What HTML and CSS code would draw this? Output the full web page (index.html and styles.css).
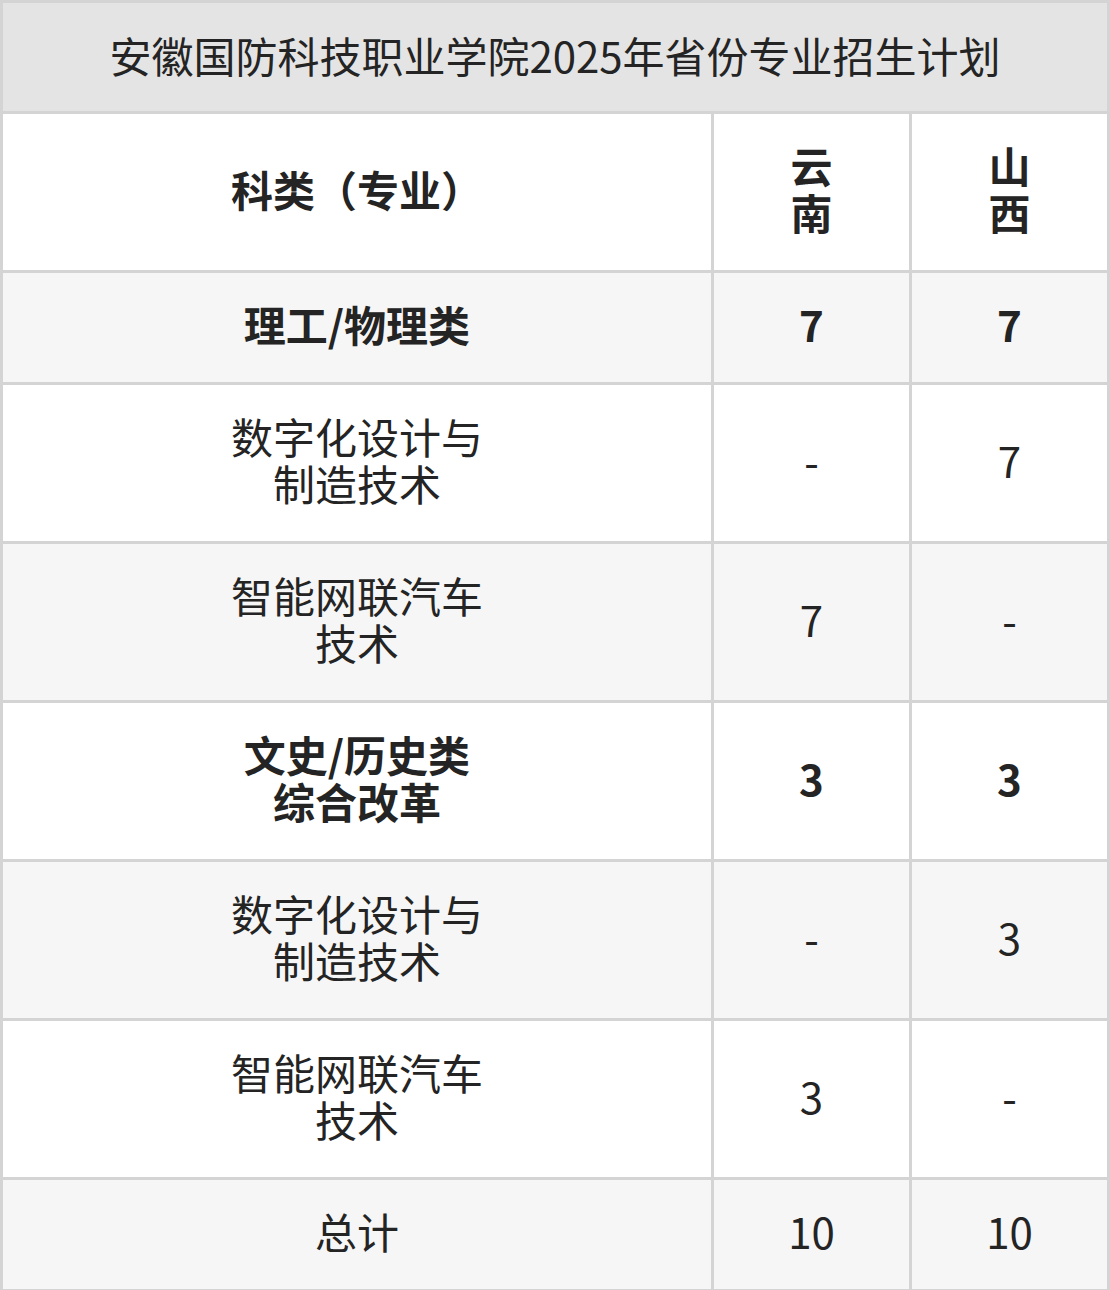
FILE: index.html
```html
<!DOCTYPE html>
<html lang="zh-CN">
<head>
<meta charset="utf-8">
<title>安徽国防科技职业学院2025年省份专业招生计划</title>
<link rel="stylesheet" href="styles.css">
</head>
<body>
<table class="plan">
  <colgroup>
    <col class="c-name">
    <col class="c-prov">
    <col class="c-prov">
  </colgroup>
  <tr class="title-row">
    <td colspan="3" class="title">安徽国防科技职业学院2025年省份专业招生计划</td>
  </tr>
  <tr class="head-row">
    <th>科类<span class="paren">（</span>专业<span class="paren">）</span></th>
    <th>云<br>南</th>
    <th>山<br>西</th>
  </tr>
  <tr class="alt strong">
    <td>理工/物理类</td>
    <td>7</td>
    <td>7</td>
  </tr>
  <tr>
    <td>数字化设计与<br>制造技术</td>
    <td>-</td>
    <td>7</td>
  </tr>
  <tr class="alt">
    <td>智能网联汽车<br>技术</td>
    <td>7</td>
    <td>-</td>
  </tr>
  <tr class="strong">
    <td>文史/历史类<br>综合改革</td>
    <td>3</td>
    <td>3</td>
  </tr>
  <tr class="alt">
    <td>数字化设计与<br>制造技术</td>
    <td>-</td>
    <td>3</td>
  </tr>
  <tr>
    <td>智能网联汽车<br>技术</td>
    <td>3</td>
    <td>-</td>
  </tr>
  <tr class="alt">
    <td>总计</td>
    <td>10</td>
    <td>10</td>
  </tr>
</table>
</body>
</html>
```

FILE: styles.css
```css
html, body {
  margin: 0;
  padding: 0;
  background: #ffffff;
}

body {
  font-family: "Noto Sans CJK SC", "Noto Sans", sans-serif;
  color: #242424;
}

.plan {
  width: 1110px;
  border-collapse: collapse;
  table-layout: fixed;
}

.c-name { width: 711px; }
.c-prov { width: 198px; }

.plan td,
.plan th {
  border: 3px solid #d4d4d4;
  text-align: center;
  vertical-align: middle;
  padding: 27px 0 35px;
  font-size: 42px;
  line-height: 47px;
  font-weight: 400;
}

.plan th {
  font-weight: 700;
  background: #ffffff;
}

.paren {
  font-family: "Noto Sans CJK TC", "Noto Sans CJK SC", sans-serif;
}

.plan .title {
  background: #e4e4e4;
  font-size: 42px;
  line-height: 46px;
  padding: 29px 0 33px;
}

.plan .alt td {
  background: #f6f6f6;
}

.plan .strong td {
  font-weight: 700;
}
```
